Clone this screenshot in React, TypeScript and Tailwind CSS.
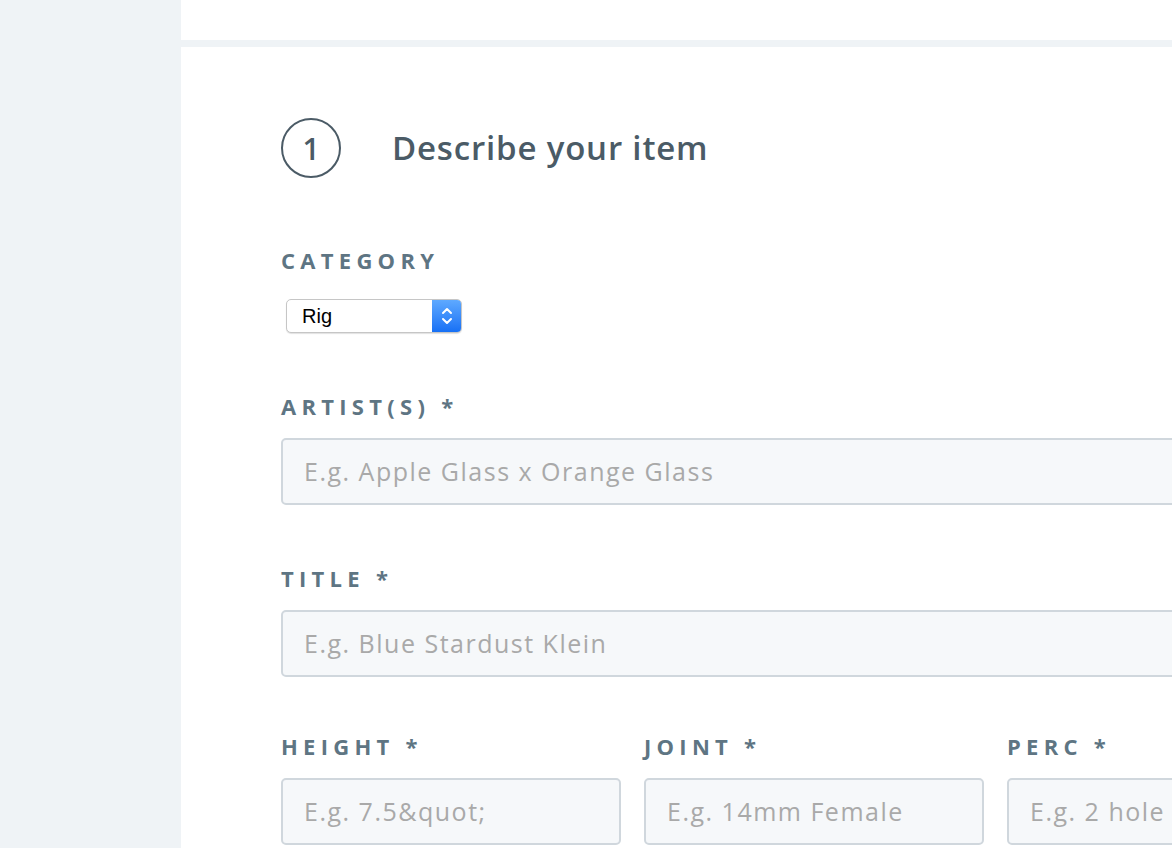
import React from 'react';

const font = { fontFamily: '"Open Sans", "Liberation Sans", sans-serif' };

function Label({ children }: { children: React.ReactNode }) {
  return (
    <div className="h-[20px] text-[22px] leading-[16px] font-bold tracking-[0.24em] text-[#5e7583] whitespace-nowrap">
      {children}
    </div>
  );
}

function TextInput({ placeholder }: { placeholder: string }) {
  return (
    <div className="mt-[20px] h-[67px] rounded-[5px] border-2 border-[#d0d7dd] bg-[#f6f8fa] px-[21px] flex items-center text-[25px] tracking-[0.06em] text-[#a9a9a9] whitespace-nowrap overflow-hidden">
      {placeholder}
    </div>
  );
}

function SelectBox() {
  return (
    <div className="mt-[27px] ml-[5px] flex h-[34px] w-[176px] rounded-[5px] border border-[#c6c6c6] bg-white shadow-[0_1px_1px_rgba(0,0,0,0.12)] overflow-hidden">
      <div
        className="flex-1 flex items-center pl-[15px] text-[20px] text-black"
        style={{ fontFamily: '"Liberation Sans", Arial, sans-serif' }}
      >
        Rig
      </div>
      <div className="w-[29px] flex items-center justify-center bg-gradient-to-b from-[#5ea9ff] to-[#1670f5]">
        <svg width="14" height="22" viewBox="0 0 14 22" fill="none" stroke="white" strokeWidth="2" strokeLinecap="round" strokeLinejoin="round">
          <path d="M3 8 L7 4 L11 8" />
          <path d="M3 14 L7 18 L11 14" />
        </svg>
      </div>
    </div>
  );
}

export default function App() {
  return (
    <div className="flex h-[848px] w-[1172px] overflow-hidden bg-[#eff3f6]" style={font}>
      <div className="w-[181px] shrink-0" />
      <div className="flex-1 flex flex-col min-w-0">
        <div className="h-[40px] bg-white shrink-0" />
        <div className="mt-[7px] flex-1 bg-white pl-[100px] pt-[71px] overflow-hidden">
          <div className="w-[1066px]">
            <div className="flex items-center">
              <div className="w-[60px] h-[60px] rounded-full border-2 border-[#4b5b66] flex items-center justify-center text-[30px] font-semibold text-[#4b5b66]">
                1
              </div>
              <h1 className="ml-[51px] text-[33px] font-semibold tracking-[0.025em] text-[#4b5b66]">Describe your item</h1>
            </div>

            <div className="mt-[74px]">
              <Label>CATEGORY</Label>
              <SelectBox />
            </div>

            <div className="mt-[65px]">
              <Label>ARTIST(S) *</Label>
              <TextInput placeholder="E.g. Apple Glass x Orange Glass" />
            </div>

            <div className="mt-[65px]">
              <Label>TITLE *</Label>
              <TextInput placeholder="E.g. Blue Stardust Klein" />
            </div>

            <div className="mt-[61px] grid grid-cols-3 gap-[23px]">
              <div>
                <Label>HEIGHT *</Label>
                <TextInput placeholder={'E.g. 7.5&quot;'} />
              </div>
              <div>
                <Label>JOINT *</Label>
                <TextInput placeholder="E.g. 14mm Female" />
              </div>
              <div>
                <Label>PERC *</Label>
                <TextInput placeholder="E.g. 2 hole" />
              </div>
            </div>
          </div>
        </div>
      </div>
    </div>
  );
}
